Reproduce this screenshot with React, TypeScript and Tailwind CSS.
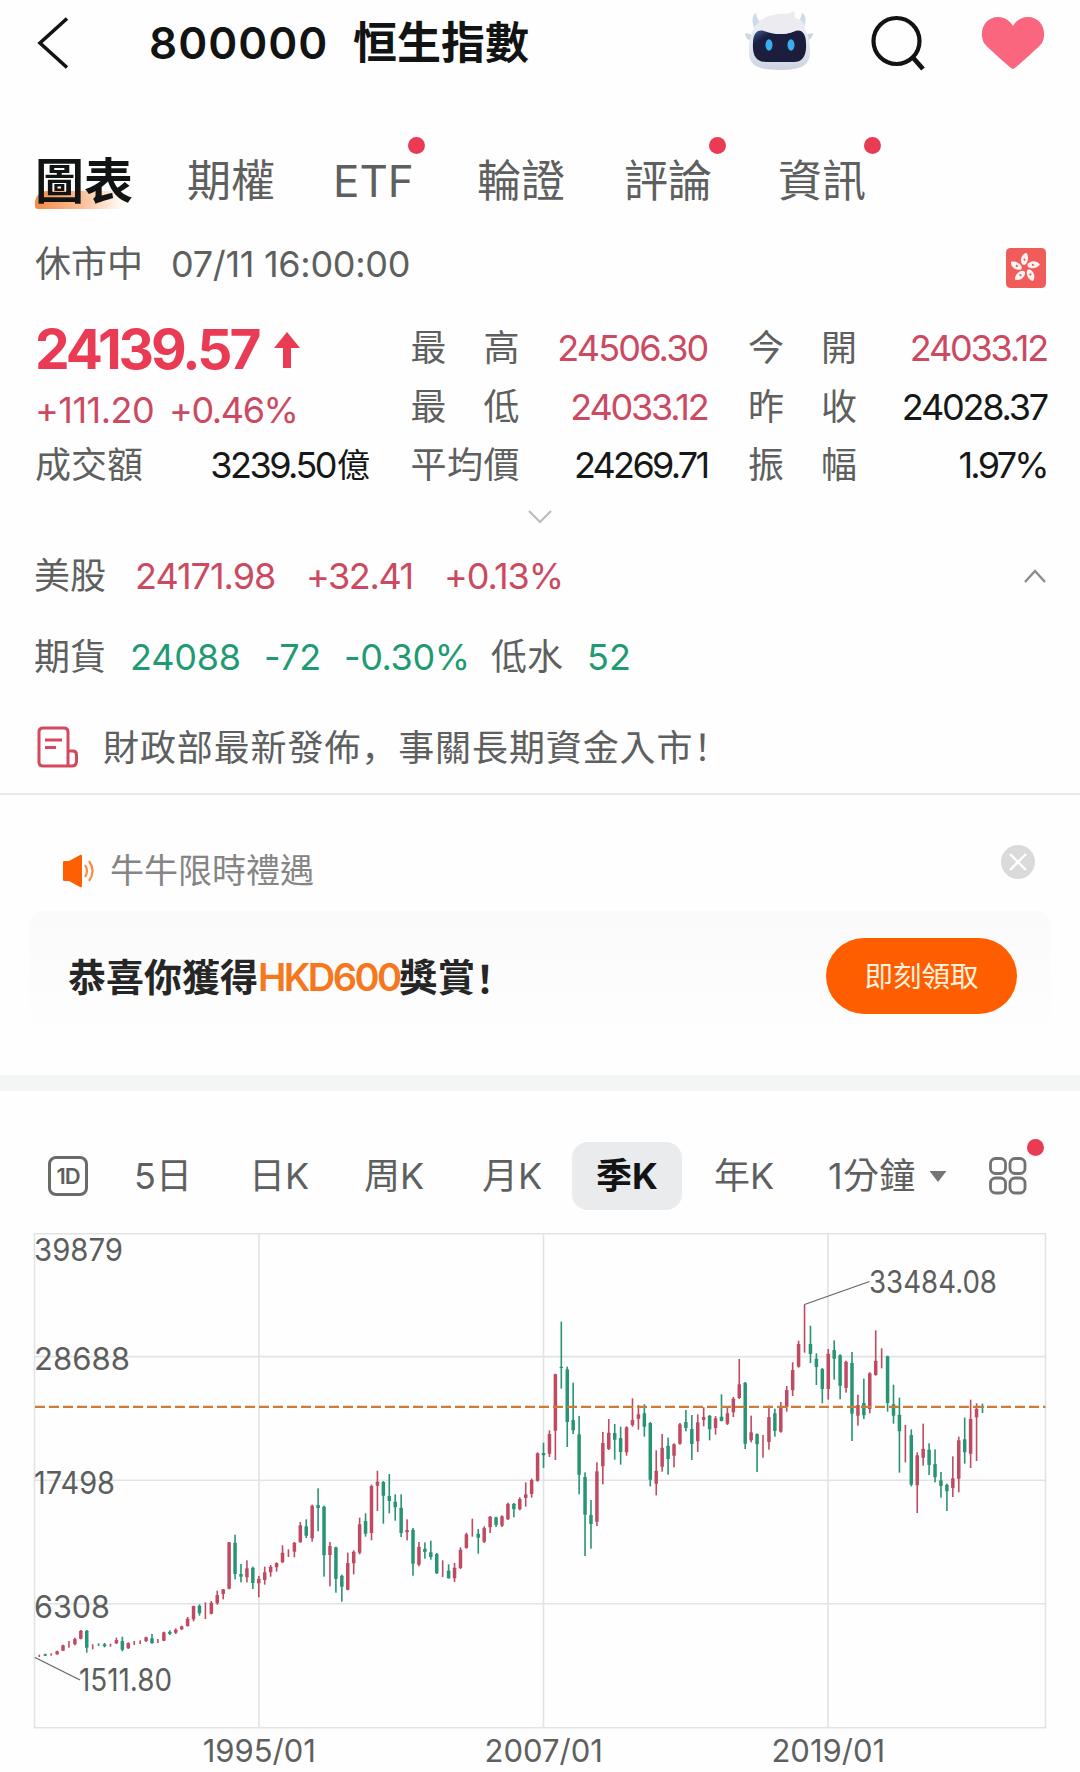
import React from 'react';

const FONT = "font-[Inter,'Noto_Sans_CJK_TC',sans-serif]";

type Candle = [up: 0 | 1, high: number, low: number, open?: number, close?: number];

// Candle extents in thirds of a pixel, one group per stretch of the series.
const RUNS: { start: number; top: number; candles: Candle[] }[] = [
  {
    start: 0,
    top: 227,
    candles: [
      [1, 584, 591], [0, 581, 588, 583, 587], [1, 580, 587], [1, 572, 584, 574, 583], [1, 554, 573, 556, 572],
      [1, 543, 563], [1, 533, 556, 537, 553], [1, 510, 538, 512, 536], [0, 510, 578, 512, 563], [1, 553, 568],
      [0, 550, 558], [0, 549, 562, 553, 559], [1, 551, 560], [1, 533, 552, 540, 550], [0, 530, 574, 543, 569],
      [1, 547, 567, 549, 565], [1, 543, 555], [1, 541, 552], [1, 530, 546, 532, 543], [0, 522, 551, 535, 550],
      [1, 537, 549], [1, 515, 543, 517, 542], [0, 511, 525, 515, 521], [1, 505, 522, 509, 518], [1, 497, 510, 499, 508],
      [1, 471, 500, 476, 498], [1, 437, 484, 438, 478], [0, 433, 467, 437, 460], [1, 427, 477], [1, 423, 463, 428, 461],
      [1, 392, 434, 405, 430], [1, 387, 418, 388, 402], [1, 246, 388, 247, 386], [0, 224, 358, 248, 342],
      [0, 312, 367, 342, 350], [1, 301, 367, 325, 352], [0, 320, 387, 323, 369], [1, 348, 412, 356, 370],
      [1, 320, 374, 337, 360], [1, 315, 350, 320, 337], [1, 307, 335, 309, 322], [1, 256, 309, 278, 307], [1, 268, 291],
    ],
  },
  {
    start: 43,
    top: 187,
    candles: [
      [1, 366, 412, 368, 395], [1, 306, 368, 316, 367], [0, 298, 354, 319, 347], [1, 254, 365, 257, 355],
      [0, 205, 334, 255, 264], [0, 257, 470, 260, 406], [1, 366, 499, 378, 405], [0, 380, 518, 382, 477],
      [0, 464, 545, 467, 500], [1, 398, 511, 429, 509], [1, 391, 463, 395, 430], [1, 293, 403, 313, 398],
      [0, 280, 350, 303, 341], [1, 194, 361, 198, 339], [1, 152, 273, 185, 197], [0, 183, 311, 186, 227],
      [0, 162, 280, 228, 243], [0, 223, 302, 245, 262], [0, 223, 351, 263, 339], [1, 298, 361, 330, 337],
      [0, 324, 467, 329, 431], [1, 366, 439, 380, 434], [0, 367, 416, 386, 396], [0, 362, 419, 397, 411],
      [0, 399, 462, 402, 460], [1, 421, 471], [0, 433, 476, 452, 475], [1, 429, 486, 443, 475],
      [1, 382, 447, 389, 444], [1, 338, 386, 343, 384], [1, 296, 350], [0, 327, 401, 341, 353],
      [1, 319, 369, 324, 365], [1, 288, 339, 290, 322], [0, 290, 321, 292, 315], [1, 286, 321, 289, 317],
      [1, 248, 300, 251, 298], [0, 249, 292, 251, 268], [1, 232, 271, 237, 268], [1, 187, 260, 223, 234],
      [1, 176, 233, 180, 222], [1, 97, 185, 100, 182],
    ],
  },
  {
    start: 85,
    top: 67,
    candles: [
      [0, 428, 504, 459, 466], [1, 391, 471, 402, 461], [1, 221, 480, 223, 392], [0, 65, 266, 200, 204],
      [0, 200, 441, 208, 366], [0, 248, 402, 360, 391], [0, 348, 583, 403, 524], [0, 517, 768, 531, 644],
      [0, 600, 746, 645, 672], [1, 487, 678, 514, 665], [1, 396, 553, 429, 499], [1, 357, 450, 398, 447],
      [0, 372, 479, 399, 419], [0, 380, 494, 414, 456], [1, 379, 467, 382, 457], [1, 295, 380, 360, 375],
      [1, 315, 389, 343, 356], [0, 313, 410, 340, 380], [0, 366, 559, 369, 539], [1, 451, 586, 512, 551],
      [1, 402, 515, 443, 500], [0, 413, 524, 437, 477], [1, 430, 502, 433, 467], [1, 369, 434, 373, 431],
      [0, 330, 394, 366, 384], [0, 345, 480, 387, 432], [1, 343, 456, 367, 424], [1, 322, 379, 351, 360],
      [0, 345, 421, 347, 388], [1, 348, 404, 355, 384], [0, 283, 364, 350, 363], [1, 323, 375, 340, 371],
      [1, 291, 351, 296, 337], [1, 177, 297, 253, 294], [0, 246, 447, 248, 431], [1, 347, 427, 397, 421],
      [0, 400, 516, 402, 433], [1, 405, 473], [1, 317, 449, 351, 426], [0, 326, 410, 340, 393],
      [1, 306, 398, 322, 395], [1, 258, 335, 270, 320], [1, 187, 288, 210, 271],
    ],
  },
  {
    start: 128,
    top: 27,
    candles: [
      [1, 242, 323, 252, 320], [1, 133, 278], [0, 197, 309, 252, 282], [0, 280, 375, 296, 321],
      [0, 324, 430, 327, 387], [1, 267, 419, 281, 387], [0, 241, 359, 270, 296], [0, 283, 418, 286, 377],
      [1, 302, 398, 305, 384], [0, 276, 543, 309, 461], [1, 404, 497, 435, 467], [0, 356, 477, 429, 466],
      [1, 337, 460, 340, 447], [1, 211, 347, 302, 345], [1, 265, 325], [0, 287, 455, 289, 429],
      [0, 374, 491, 433, 467], [0, 413, 638, 464, 514], [1, 495, 607], [0, 508, 679, 525, 674],
      [1, 577, 759, 586, 676], [1, 491, 617, 566, 593], [0, 550, 645, 569, 615], [0, 568, 667, 612, 652],
      [0, 636, 713, 661, 678], [0, 671, 753, 674, 694], [1, 589, 711, 655, 684], [1, 530, 697, 541, 656],
      [0, 473, 611, 538, 577], [1, 419, 624, 477, 581], [1, 430, 603, 446, 472], [0, 431, 459, 439, 443],
    ],
  },
];

const AXIS = [
  { v: '39879', y: 28, w: 89 },
  { v: '28688', y: 137, w: 96 },
  { v: '17498', y: 261, w: 81 },
  { v: '6308', y: 385, w: 76 },
];

function Chart() {
  return (
    <svg className="block shrink-0" width="1080" height="496" viewBox="0 0 1080 496">
      <g stroke="#e2e4e4" strokeWidth="1.6" fill="none">
        <path d="M34.5 0.8H1045.5V494.7H34.5Z" />
        <path d="M34.5 123.6H1045.5M34.5 247.3H1045.5M34.5 370.8H1045.5M259 0V494M543.5 0V494M828 0V494" />
      </g>
      {RUNS.map((run) =>
        run.candles.map(([up, high, low, a, b], i) => {
          const x = 39.3 + 5.932 * (run.start + i);
          const fill = up ? '#bf4a61' : '#279473';
          return (
            <g key={run.start + i} fill={fill}>
              <rect x={x - 0.8} y={run.top + high / 3} width="1.6" height={(low - high) / 3} />
              {a !== undefined && b !== undefined && (
                <rect x={x - 1.75} y={run.top + a / 3} width="3.5" height={(b - a) / 3} rx="0.5" />
              )}
            </g>
          );
        }),
      )}
      <path d="M35 173.9H1045.5" stroke="#cc7c38" strokeWidth="2.2" strokeDasharray="10 4" />
      <path d="M804.5 71.5L869.5 48.5M35 424.5L80 447" stroke="#666" strokeWidth="1.3" />
      <g fill="#5c5e5e" fontSize="30.5" lengthAdjust="spacingAndGlyphs">
        {AXIS.map((t) => (
          <text key={t.v} x="34" y={t.y} textLength={t.w} lengthAdjust="spacingAndGlyphs">
            {t.v}
          </text>
        ))}
        <text x="869" y="60" textLength="128" lengthAdjust="spacingAndGlyphs">33484.08</text>
        <text x="79" y="458" textLength="93" lengthAdjust="spacingAndGlyphs">1511.80</text>
      </g>
    </svg>
  );
}

function Robot() {
  return (
    <svg className="block" width="72" height="66" viewBox="0 0 72 66">
      <defs>
        <linearGradient id="shell" x1="0" y1="0" x2="0" y2="1">
          <stop offset="0" stopColor="#f2f3f8" />
          <stop offset="0.6" stopColor="#e0e5ee" />
          <stop offset="1" stopColor="#ccd3e0" />
        </linearGradient>
        <linearGradient id="visor" x1="0" y1="0" x2="1" y2="1">
          <stop offset="0" stopColor="#45619a" />
          <stop offset="0.22" stopColor="#1b1f40" />
          <stop offset="1" stopColor="#1c1c38" />
        </linearGradient>
      </defs>
      <path d="M11 19C7 12 8 5 12 3C13 9 15 12 20 14ZM59 19C63 12 62 5 58 3C57 9 55 12 50 14Z" fill="#cbdbe8" />
      <path d="M9 25L1 23C1 28 5 31 9 31ZM61 25L69 23C69 28 65 31 61 31Z" fill="#ccd7e4" />
      <path d="M5 42C4 20 15 5 35 5C55 5 67 20 66 42C66 55 58 60 35 60C13 60 5 55 5 42Z" fill="url(#shell)" />
      <path d="M9 33C9 24 13 19 20 21C30 25 42 25 51 21C58 19 62 24 62 33C63 46 58 52 50 52H22C13 52 8 46 9 33Z" fill="url(#visor)" />
      <path d="M11 18C16 5 35 3 43 4C47 3 49 1 50 1L51 8C58 9 61 14 61 19C52 18 51 24 35 24C23 24 22 17 11 18Z" fill="#ebebf0" />
      <ellipse cx="25" cy="35" rx="3.5" ry="5.7" fill="#3aaef0" />
      <ellipse cx="47" cy="35" rx="3.5" ry="5.7" fill="#3aaef0" />
    </svg>
  );
}

function Flag() {
  return (
    <svg className="block" width="40" height="40" viewBox="0 0 40 40">
      <rect width="40" height="40" rx="4.5" fill="#f05c59" />
      {[0, 72, 144, 216, 288].map((r) => (
        <g key={r} transform={`rotate(${r - 4} 19 20) translate(19 10.5) rotate(14)`}>
          <path d="M-0.5 6.5C-4.5 3.5 -4 -3.5 1 -6C4.5 -3 4.5 3.5 1.5 6Z" fill="#fff4f2" />
          <circle cx="0.3" cy="1" r="1.1" fill="#f05c59" />
        </g>
      ))}
    </svg>
  );
}

const Dot = ({ className }: { className: string }) => (
  <span className={`absolute size-[17px] rounded-full bg-[#ea3a54] ${className}`} />
);

const Punct = ({ children }: { children: string }) => (
  <span lang="zh-CN" className="font-['Noto_Sans_CJK_SC',sans-serif]">{children}</span>
);

const TABS = [
  { t: '期權', w: 'w-[146px]' },
  { t: 'ETF', w: 'w-[144px]', dot: 'left-[75px]' },
  { t: '輪證', w: 'w-[147px]' },
  { t: '評論', w: 'w-[154px]', dot: 'left-[85px]' },
  { t: '資訊', w: 'w-[120px]', dot: 'left-[86px]' },
];

const STATS = [
  [
    { l: '最高', v: '24506.30', tone: 'tracking-[-1.8px] text-[#cb4a61]' },
    { l: '今開', v: '24033.12', tone: 'tracking-[-2.2px] text-[#cb4a61]' },
  ],
  [
    { l: '最低', v: '24033.12', tone: 'tracking-[-2.2px] text-[#cb4a61]' },
    { l: '昨收', v: '24028.37', tone: 'tracking-[-2.2px] text-[#161818]' },
  ],
  [
    { l: '平均價', v: '24269.71', tone: 'tracking-[-2.700px] text-[#161818]' },
    { l: '振幅', v: '1.97%', tone: 'tracking-[-2.700px] text-[#161818]' },
  ],
];

function Stat({ l, v, tone }: { l: string; v: string; tone: string }) {
  return (
    <div className="flex items-center justify-between">
      <span className="flex w-[109px] justify-between text-[#5e6060]">
        {l.split('').map((c) => (
          <span key={c}>{c}</span>
        ))}
      </span>
      <span className={tone}>{v}</span>
    </div>
  );
}

export default function App() {
  return (
    <main className={`${FONT} flex h-[1772px] w-[1080px] flex-col overflow-hidden bg-[#fefefe] leading-none whitespace-nowrap text-[#5e6060]`}>
      <header className="flex h-[86px] shrink-0 items-center pl-[36px] text-[#121414]">
        <svg width="34" height="52" viewBox="0 0 34 52" fill="none" stroke="currentColor" strokeWidth="3.6">
          <path d="M31 1.5L4 26L31 50.5" />
        </svg>
        <h1 className="ml-[79px] flex w-[595px] items-center text-[44px] font-semibold">
          <span className="w-[204px] tracking-[1px]">800000</span>
          <span className="font-bold">恒生指數</span>
        </h1>
        <div className="w-[125px]"><Robot /></div>
        <svg className="w-[112px] shrink-0" width="112" height="56" viewBox="0 0 112 56" fill="none" stroke="#121414" strokeWidth="4.2">
          <circle cx="27.5" cy="26" r="23" />
          <path d="M43 41.5L54 54" strokeWidth="4.8" />
        </svg>
        <svg width="64" height="54" viewBox="0 0 64 54">
          <path d="M32 53C30 53 4 29 3 27C-3 15 4 1 17 1C24 1 29 5 32 10C35 5 40 1 47 1C60 1 67 15 61 27C60 29 34 53 32 53Z" fill="#f9667e" />
        </svg>
      </header>

      <nav className="mt-[50px] flex h-[90px] shrink-0 items-center pl-[35px] text-[44px]">
        <div className="relative w-[152px] text-[49px] font-bold text-[#121414]">
          <span className="absolute top-[34px] left-0 h-[18px] w-[90px] rounded-tl-[12px] rounded-bl-[3px] bg-linear-to-r from-[#f48a45] via-[#f9bd93] to-white" />
          <span className="relative">圖表</span>
        </div>
        {TABS.map((t) => (
          <div key={t.t} className={`relative shrink-0 ${t.w}`}>
            {t.t}
            {t.dot && <Dot className={`top-[-22px] ${t.dot}`} />}
          </div>
        ))}
      </nav>

      <div className="flex h-[76px] shrink-0 items-center pr-[34px] pl-[35px] text-[36px]">
        <span className="w-[136px]">休市中</span>
        <span className="tracking-[-0.3px]">07/11 16:00:00</span>
        <div className="mt-[7px] ml-auto"><Flag /></div>
      </div>

      <section className="mt-4 grid h-[176px] shrink-0 grid-cols-[335px_297px_299px] grid-rows-[59px_59px_58px] gap-x-[40.5px] pl-[35px] text-[36px]">
        <div className="flex items-center pt-1 text-[#ea3b55]">
          <span className="w-[238px] text-[55px] font-bold tracking-[-3px]">24139.57</span>
          <svg width="28" height="38" viewBox="0 0 28 38" fill="currentColor">
            <path d="M14 1L27 17H18V37H10V17H1Z" />
          </svg>
        </div>
        <Stat {...STATS[0][0]} />
        <Stat {...STATS[0][1]} />
        <div className="flex items-center pt-1.5 text-[#cb4a61]">
          <span className="w-[134px] tracking-[-0.5px]">+111.20</span>
          <span className="tracking-[-1.4px]">+0.46%</span>
        </div>
        <Stat {...STATS[1][0]} />
        <Stat {...STATS[1][1]} />
        <div className="flex items-center justify-between">
          <span>成交額</span>
          <span className="flex items-center text-[#161818]">
            <span className="tracking-[-2.5px]">3239.50</span>
            <span className="ml-0.5 text-[33px]">億</span>
          </span>
        </div>
        <Stat {...STATS[2][0]} />
        <Stat {...STATS[2][1]} />
      </section>

      <div className="flex h-[44px] shrink-0 items-center justify-center pt-0.5">
        <svg width="24" height="14" viewBox="0 0 24 14" fill="none" stroke="#bbbdbd" strokeWidth="2.2"><path d="M1 1L12 12L23 1" /></svg>
      </div>

      <div className="flex h-[76px] shrink-0 items-center pr-[34px] pl-[34px] text-[36px] text-[#cb4a61]">
        <span className="w-[101px] text-[#5e6060]">美股</span>
        <span className="w-[171px] tracking-[-1px]">24171.98</span>
        <span className="w-[138px] tracking-[-1.4px]">+32.41</span>
        <span className="tracking-[-1px]">+0.13%</span>
        <svg className="ml-auto" width="22" height="14" viewBox="0 0 22 14" fill="none" stroke="#8a8c8c" strokeWidth="2.4"><path d="M1 13L11 2L21 13" /></svg>
      </div>

      <div className="flex h-[86px] shrink-0 items-center pl-[34px] text-[36px] text-[#1f9a72]">
        <span className="w-[96px] text-[#5e6060]">期貨</span>
        <span className="w-[134px] tracking-[-0.2px]">24088</span>
        <span className="w-[80px] tracking-[-0.4px]">-72</span>
        <span className="w-[147px] tracking-[-0.4px]">-0.30%</span>
        <span className="w-[96px] text-[#5e6060]">低水</span>
        <span>52</span>
      </div>

      <div className="flex h-[95px] shrink-0 items-center border-b-2 border-[#e9eaea] pl-[37px] text-[36px]">
        <svg width="66" height="42" viewBox="0 0 66 42" fill="none" stroke="#d4495f" strokeWidth="3">
          <path d="M35 40H6Q2 40 2 36V6Q2 2 6 2H27Q31 2 31 6V40M31 25H36Q39.500 25 39.500 29V35Q39.500 40 35 40M8 14H25M8 21.500H19" />
        </svg>
        <span className="tracking-[0.9px]">財政部最新發佈<Punct>，</Punct>事關長期資金入市<Punct>！</Punct></span>
      </div>

      <section className="flex h-[280px] shrink-0 flex-col">
        <div className="flex h-[116px] items-center pt-9 pr-[45px] pl-[62px] text-[34px] text-[#858585]">
          <svg width="48" height="34" viewBox="0 0 48 34">
            <path d="M1 8Q1 7 2 7H7L18 1Q20 0 20 2V32Q20 34 18 33L7 27H2Q1 27 1 26Z" fill="#fd6004" />
            <path d="M23 11Q27 17 23 23M27 7Q34 17 27 27" stroke="#fd8a43" strokeWidth="2.2" fill="none" />
          </svg>
          <span>牛牛限時禮遇</span>
          <svg className="mt-[-18px] ml-auto" width="34" height="34" viewBox="0 0 34 34">
            <circle cx="17" cy="17" r="17" fill="#dadada" />
            <path d="M9 9L25 25M25 9L9 25" stroke="#fff" strokeWidth="2.4" />
          </svg>
        </div>
        <div className="mx-[29px] flex h-[130px] items-center justify-between rounded-2xl bg-linear-to-b from-[#fafafa] to-[#fefefe] pr-[34px] pl-[39px]">
          <p className="flex items-center pt-0.5 text-[38px] font-bold text-[#262626]">
            恭喜你獲得<span className="font-semibold tracking-[-2.6px] text-[#f5781f]">HKD600</span>獎賞<Punct>！</Punct>
          </p>
          <button className="h-[76px] w-[191px] rounded-full bg-[#ff5e00] pt-0.5 text-[28.5px] text-[#fff0dc]">即刻領取</button>
        </div>
      </section>

      <div className="h-4 shrink-0 bg-[#f4f5f5]" />

      <nav className="mt-[51px] mb-[23px] flex h-[68px] shrink-0 items-center pl-[48px] text-[36px]">
        <span className="mr-[46px] flex size-[40px] items-center justify-center rounded-[8px] border-3 border-[#696b6b] text-[22px] font-semibold tracking-[-1px]">1D</span>
        <span className="w-[115px]">5日</span>
        <span className="w-[115px]">日K</span>
        <span className="w-[118px]">周K</span>
        <span className="w-[90px]">月K</span>
        <span className="mr-[32px] flex h-[68px] w-[110px] items-center justify-center rounded-[16px] bg-[#e9ebec] font-bold text-[#121414]">季K</span>
        <span className="w-[114px]">年K</span>
        <span className="w-[101px] tracking-[0.3px]">1分鐘</span>
        <svg width="18" height="12" viewBox="0 0 18 12"><path d="M0.500 1H17.500L9 12Z" fill="#747676" /></svg>
        <span className="relative ml-[42px]">
          <svg width="38" height="38" viewBox="0 0 38 38" fill="none" stroke="#717373" strokeWidth="2.8">
            <rect x="1.5" y="1.5" width="15" height="15" rx="5" />
            <rect x="21" y="1.5" width="15" height="15" rx="5" />
            <rect x="1.5" y="21" width="15" height="15" rx="5" />
            <rect x="21" y="21" width="15" height="15" rx="5" />
          </svg>
          <Dot className="top-[-18px] left-[38px]" />
        </span>
      </nav>

      <Chart />
      <div className="flex h-[43px] shrink-0 items-center pl-[117px] text-[31px]">
        <span className="w-[284.5px] text-center">1995/01</span>
        <span className="w-[284.5px] text-center">2007/01</span>
        <span className="w-[284.5px] text-center">2019/01</span>
      </div>
    </main>
  );
}
